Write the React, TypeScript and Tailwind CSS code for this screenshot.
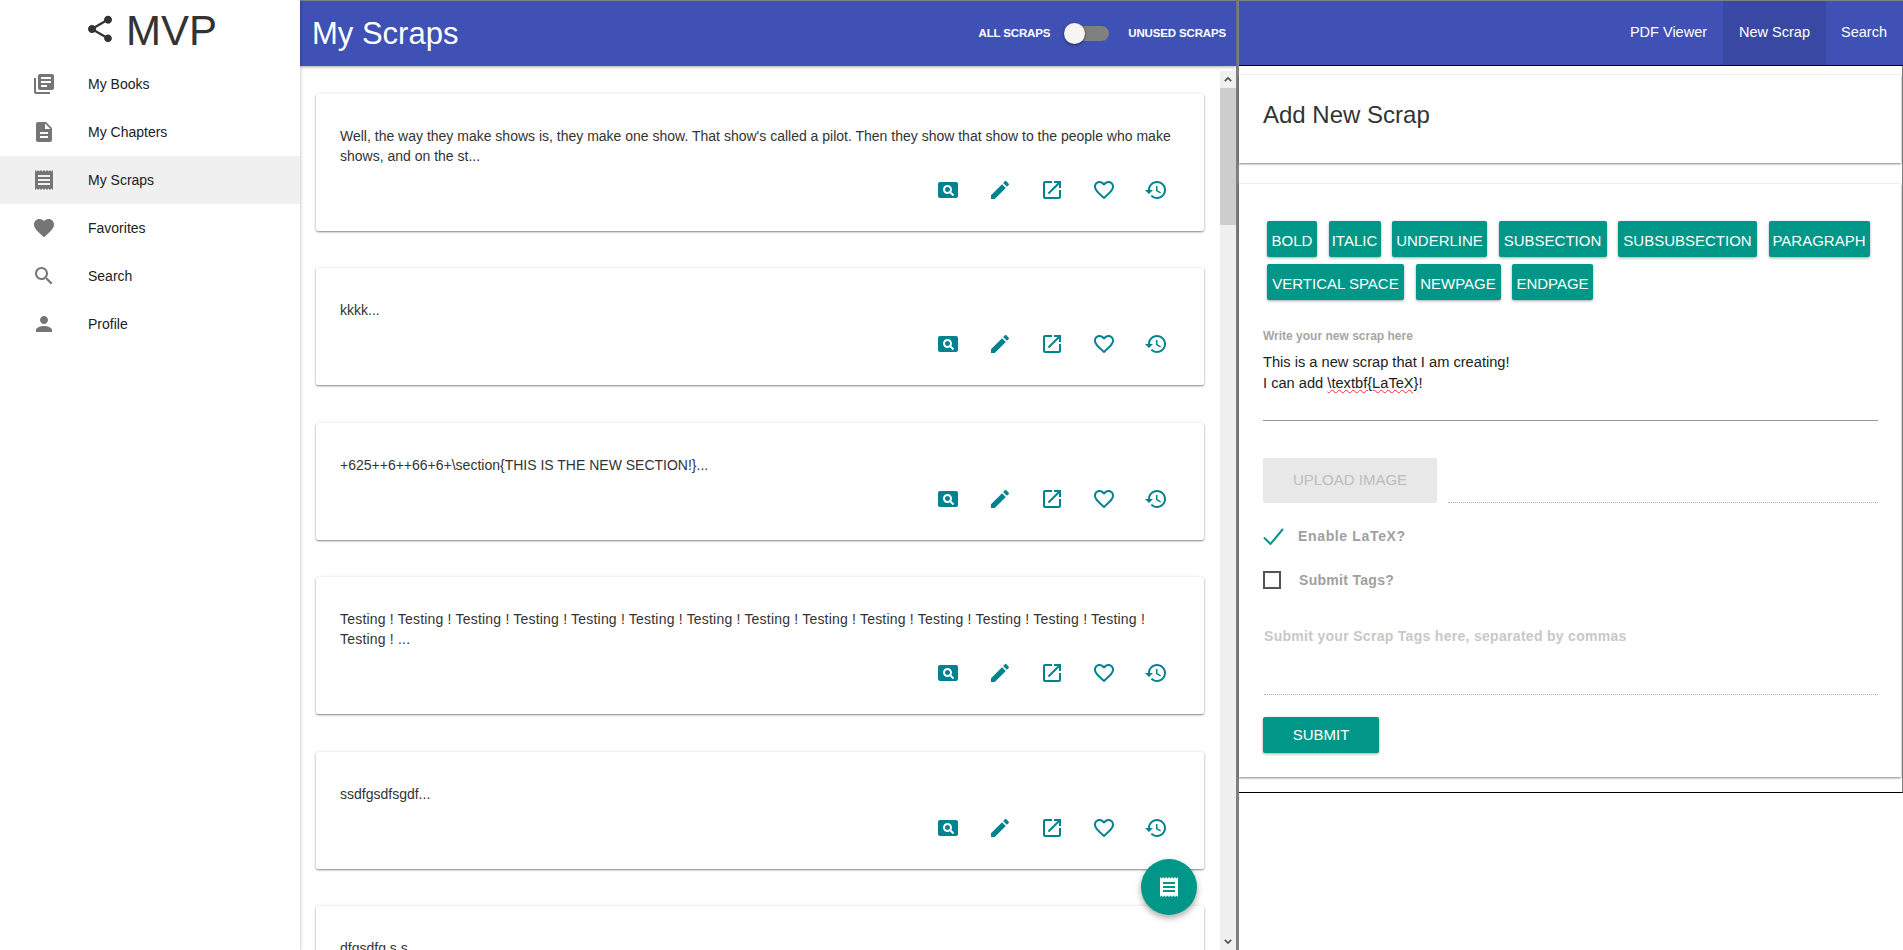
import type { ReactNode } from "react";

const paths = {
  books:
    "M4 6H2v14c0 1.1.9 2 2 2h14v-2H4V6zm16-4H8c-1.1 0-2 .9-2 2v12c0 1.1.9 2 2 2h12c1.1 0 2-.9 2-2V4c0-1.1-.9-2-2-2zm-1 9H9V9h10v2zm-4 4H9v-2h6v2zm4-8H9V5h10v2z",
  description:
    "M14 2H6c-1.1 0-1.99.9-1.99 2L4 20c0 1.1.89 2 1.99 2H18c1.1 0 2-.9 2-2V8l-6-6zm2 16H8v-2h8v2zm0-4H8v-2h8v2zm-3-5V3.5L18.5 9H13z",
  receipt:
    "M18 17H6v-2h12v2zm0-4H6v-2h12v2zm0-4H6V7h12v2zM3 22l1.5-1.5L6 22l1.5-1.5L9 22l1.5-1.5L12 22l1.5-1.5L15 22l1.5-1.5L18 22l1.5-1.5L21 22V2l-1.5 1.5L18 2l-1.5 1.5L15 2l-1.5 1.5L12 2l-1.5 1.5L9 2 7.5 3.5 6 2 4.5 3.5 3 2v20z",
  favorite:
    "M12 21.35l-1.45-1.32C5.4 15.36 2 12.28 2 8.5 2 5.42 4.42 3 7.5 3c1.74 0 3.41.81 4.5 2.09C13.09 3.81 14.76 3 16.5 3 19.58 3 22 5.42 22 8.5c0 3.78-3.4 6.86-8.55 11.54L12 21.35z",
  search:
    "M15.5 14h-.79l-.28-.27C15.41 12.59 16 11.11 16 9.5 16 5.91 13.09 3 9.5 3S3 5.91 3 9.5 5.91 16 9.5 16c1.61 0 3.09-.59 4.23-1.57l.27.28v.79l5 4.99L20.49 19l-4.99-5zm-6 0C7.01 14 5 11.99 5 9.5S7.01 5 9.5 5 14 7.01 14 9.5 11.99 14 9.5 14z",
  person:
    "M12 12c2.21 0 4-1.79 4-4s-1.79-4-4-4-4 1.79-4 4 1.79 4 4 4zm0 2c-2.67 0-8 1.34-8 4v2h16v-2c0-2.66-5.33-4-8-4z",
  share:
    "M18 16.08c-.76 0-1.44.3-1.96.77L8.91 12.7c.05-.23.09-.46.09-.7s-.04-.47-.09-.7l7.05-4.11c.54.5 1.25.81 2.04.81 1.66 0 3-1.34 3-3s-1.34-3-3-3-3 1.34-3 3c0 .24.04.47.09.7L8.04 9.81C7.5 9.31 6.79 9 6 9c-1.66 0-3 1.34-3 3s1.34 3 3 3c.79 0 1.5-.31 2.04-.81l7.12 4.16c-.05.21-.08.43-.08.65 0 1.61 1.31 2.92 2.92 2.92 1.61 0 2.92-1.31 2.92-2.92s-1.31-2.92-2.92-2.92z",
  pageview:
    "M11.5 9C10.12 9 9 10.12 9 11.5s1.12 2.5 2.5 2.5 2.5-1.12 2.5-2.5S12.88 9 11.5 9zM20 4H4c-1.1 0-2 .9-2 2v12c0 1.1.9 2 2 2h16c1.1 0 2-.9 2-2V6c0-1.1-.9-2-2-2zm-3.21 14.21l-2.91-2.91c-.69.44-1.51.7-2.39.7C9.01 16 7 13.99 7 11.5S9.01 7 11.5 7 16 9.01 16 11.5c0 .88-.26 1.69-.7 2.39l2.91 2.9-1.42 1.42z",
  edit: "M3 17.25V21h3.75L17.81 9.94l-3.75-3.75L3 17.25zM20.71 7.04c.39-.39.39-1.02 0-1.41l-2.34-2.34c-.39-.39-1.02-.39-1.41 0l-1.83 1.83 3.75 3.75 1.83-1.83z",
  launch:
    "M19 19H5V5h7V3H5c-1.11 0-2 .9-2 2v14c0 1.1.89 2 2 2h14c1.1 0 2-.9 2-2v-7h-2v7zM14 3v2h3.59l-9.83 9.83 1.41 1.41L19 6.41V10h2V3h-7z",
  favoriteBorder:
    "M16.5 3c-1.74 0-3.41.81-4.5 2.09C10.91 3.81 9.24 3 7.5 3 4.42 3 2 5.42 2 8.5c0 3.78 3.4 6.86 8.55 11.54L12 21.35l1.45-1.32C18.6 15.36 22 12.28 22 8.5 22 5.42 19.58 3 16.5 3zm-4.4 15.55l-.1.1-.1-.1C7.14 14.24 4 11.39 4 8.5 4 6.5 5.5 5 7.5 5c1.54 0 3.04.99 3.57 2.36h1.87C13.46 5.99 14.96 5 16.5 5c2 0 3.5 1.5 3.5 3.5 0 2.89-3.14 5.74-7.9 10.05z",
  restore:
    "M13 3c-4.97 0-9 4.03-9 9H1l3.89 3.89.07.14L9 12H6c0-3.87 3.13-7 7-7s7 3.13 7 7-3.13 7-7 7c-1.93 0-3.68-.79-4.94-2.06l-1.42 1.42C8.27 19.99 10.51 21 13 21c4.97 0 9-4.03 9-9s-4.03-9-9-9zm-1 5v5l4.28 2.54.72-1.21-3.5-2.08V8H12z",
};

const Icon = ({ d, className }: { d: string; className: string }) => (
  <svg viewBox="0 0 24 24" className={className} fill="currentColor">
    <path d={d} />
  </svg>
);

const menuList = [
  { listName: "My Books", icon: paths.books },
  { listName: "My Chapters", icon: paths.description },
  { listName: "My Scraps", icon: paths.receipt, active: true },
  { listName: "Favorites", icon: paths.favorite },
  { listName: "Search", icon: paths.search },
  { listName: "Profile", icon: paths.person },
];

const scraps = [
  {
    text: "Well, the way they make shows is, they make one show. That show's called a pilot. Then they show that show to the people who make shows, and on the st...",
  },
  { text: "kkkk..." },
  { text: "+625++6++66+6+\\section{THIS IS THE NEW SECTION!}..." },
  {
    text: "Testing ! Testing ! Testing ! Testing ! Testing ! Testing ! Testing ! Testing ! Testing ! Testing ! Testing ! Testing ! Testing ! Testing ! Testing ! ...",
    spacing: "tracking-[0.2px]",
  },
  { text: "ssdfgsdfsgdf..." },
  { text: "dfgsdfg s s..." },
];

const toolbar = [
  { label: "BOLD", width: "w-[50px]" },
  { label: "ITALIC", width: "w-[52px]" },
  { label: "UNDERLINE", width: "w-[95px]" },
  { label: "SUBSECTION", width: "w-[108px]" },
  { label: "SUBSUBSECTION", width: "w-[139px]" },
  { label: "PARAGRAPH", width: "w-[101px]" },
  { label: "VERTICAL SPACE", width: "w-[137px]" },
  { label: "NEWPAGE", width: "w-[85px]" },
  { label: "ENDPAGE", width: "w-[81px]" },
];

const Sidebar = () => (
  <aside className="w-[300px] shrink-0 bg-white z-20 shadow-[1px_0_3px_rgba(0,0,0,0.2)]">
    <div className="h-[60px] flex items-center pl-[84px] text-[#333]">
      <Icon d={paths.share} className="w-[32px] h-[32px] mt-[-2px]" />
      <span className="ml-[10px] text-[42px] leading-[60px] mt-[1px]">MVP</span>
    </div>
    {menuList.map((item) => (
      <div
        key={item.listName}
        className={`h-[48px] flex items-center pl-[32px] ${item.active ? "bg-[#f0f0f0]" : ""}`}
      >
        <Icon d={item.icon} className="w-[24px] h-[24px] text-[#757575]" />
        <span className="ml-[32px] text-[14px] text-[#212121]">{item.listName}</span>
      </div>
    ))}
  </aside>
);

const ScrapCard = ({ text, spacing }: { text: string; spacing?: string }) => (
  <div className="bg-white rounded-[2px] pt-[32px] pl-[24px] pb-[29px] mb-[37.4px] shadow-[0_1px_2px_rgba(0,0,0,0.45),0_0_4px_rgba(0,0,0,0.08)]">
    <p className={`text-[14px] leading-[20px] text-[#333] pr-[24px] ${spacing ?? ""}`}>{text}</p>
    <div className="mt-[12px] pr-[36px] flex justify-end gap-[28px] text-[#00838f]">
      <Icon d={paths.pageview} className="w-[24px] h-[24px]" />
      <Icon d={paths.edit} className="w-[24px] h-[24px]" />
      <Icon d={paths.launch} className="w-[24px] h-[24px]" />
      <Icon d={paths.favoriteBorder} className="w-[24px] h-[24px]" />
      <Icon d={paths.restore} className="w-[24px] h-[24px]" />
    </div>
  </div>
);

const ScrapsPane = () => (
  <main className="w-[936px] shrink-0 h-[950px] flex flex-col relative">
    <header className="h-[66px] shrink-0 border-t border-[#808080] bg-[#3f51b5] text-white flex items-center pl-[12px] pr-[10px] z-10 shadow-[0_1px_3px_rgba(0,0,0,0.35)]">
      <h1 className="text-[31px] leading-none flex-1">My Scraps</h1>
      <span className="text-[11.5px] font-bold tracking-[-0.15px]">ALL SCRAPS</span>
      <div className="relative w-[44px] h-[15px] ml-[15px] mr-[19px] rounded-full bg-[#808080]">
        <div className="absolute left-[-1px] top-[-3px] w-[21px] h-[21px] rounded-full bg-[#f5f5f5] shadow-[0_1px_3px_rgba(0,0,0,0.5)]" />
      </div>
      <span className="text-[11.5px] font-bold tracking-[-0.15px]">UNUSED SCRAPS</span>
    </header>
    <div className="flex-1 min-h-0 flex">
      <div className="flex-1 overflow-hidden pt-[28px] pl-[16px] pr-[16px]">
        {scraps.map((scrap) => (
          <ScrapCard key={scrap.text} text={scrap.text} spacing={scrap.spacing} />
        ))}
      </div>
      <div className="w-[16px] shrink-0 mt-[5px] bg-[#f0f0f0] flex flex-col items-center">
        <div className="h-[17px] flex items-center text-[#505050]">
          <svg viewBox="0 0 10 6" className="w-[8px] h-[5px]" fill="none" stroke="currentColor" strokeWidth="2">
            <path d="M1 5l4-4 4 4" />
          </svg>
        </div>
        <div className="w-full h-[137px] bg-[#cdcdcd]" />
        <div className="flex-1" />
        <div className="h-[17px] flex items-center text-[#505050]">
          <svg viewBox="0 0 10 6" className="w-[8px] h-[5px]" fill="none" stroke="currentColor" strokeWidth="2">
            <path d="M1 1l4 4 4-4" />
          </svg>
        </div>
      </div>
    </div>
    <button className="absolute left-[841px] top-[859px] w-[56px] h-[56px] rounded-full bg-[#009688] text-white flex items-center justify-center shadow-[0_3px_6px_rgba(0,0,0,0.35)]">
      <Icon d={paths.receipt} className="w-[24px] h-[24px]" />
    </button>
  </main>
);

const TealButton = ({ children, className }: { children: ReactNode; className: string }) => (
  <button className={`h-[36px] bg-[#009688] text-white rounded-[2px] whitespace-nowrap shadow-[0_1px_3px_rgba(0,0,0,0.35)] ${className}`}>
    {children}
  </button>
);

const NewScrapPane = () => (
  <section className="flex-1 min-w-0 h-[950px] flex flex-col border-l-[3px] border-[#808080]">
    <nav className="h-[66px] shrink-0 border-t border-b border-t-[#808080] border-b-black bg-[#3f51b5] text-white text-[14.5px] flex justify-end pr-[1px] whitespace-nowrap">
      <span className="px-[16px] flex items-center">PDF Viewer</span>
      <span className="flex items-center justify-center bg-[#3949a3] w-[103px]">New Scrap</span>
      <span className="px-[15px] flex items-center">Search</span>
    </nav>
    <div className="h-[727px] shrink-0 border-b border-r border-b-black border-r-[#808080] pt-[9px] pr-[1px]">
      <div className="h-[88px] bg-white flex items-start pl-[24px] pt-[24px] shadow-[0_1px_2px_rgba(0,0,0,0.45),0_0_3px_rgba(0,0,0,0.08)]">
        <h2 className="text-[24px] leading-[32px] text-[#333]">Add New Scrap</h2>
      </div>
      <div className="mt-[21px] h-[593px] bg-white pt-[37px] pl-[24px] pr-[23px] shadow-[0_1px_2px_rgba(0,0,0,0.45),0_0_3px_rgba(0,0,0,0.08)]">
        <div className="flex flex-wrap gap-x-[11.5px] gap-y-[7px] pl-[4px]">
          {toolbar.map((item) => (
            <TealButton key={item.label} className={`pt-[4px] text-[15px] ${item.width}`}>
              {item.label}
            </TealButton>
          ))}
        </div>
        <label className="block mt-[29px] text-[12px] leading-[14px] font-bold text-[#a6a6a6]">
          Write your new scrap here
        </label>
        <div className="mt-[9px] h-[69px] border-b border-[#999] text-[14.65px] leading-[21px] text-[#212121]">
          <div>This is a new scrap that I am creating!</div>
          <div>
            I can add{" "}
            <span className="underline decoration-wavy decoration-red-500 decoration-1">{"\\textbf{LaTeX}"}</span>!
          </div>
        </div>
        <div className="mt-[37px] flex items-end">
          <div className="w-[174px] h-[45px] rounded-[2px] bg-[#e8e8e8] text-[#bdbdbd] text-[15px] flex items-center justify-center">
            UPLOAD IMAGE
          </div>
          <div className="flex-1 ml-[11px] border-b border-dotted border-[#b0b0b0]" />
        </div>
        <div className="mt-[24px] h-[18px] flex items-center">
          <svg viewBox="0 0 21 17" className="w-[21px] h-[17px]" fill="none" stroke="#009688" strokeWidth="2">
            <path d="M1 9.5l6.5 6.5L20 1" />
          </svg>
          <span className="ml-[14px] text-[14px] font-bold tracking-[0.65px] text-[#a09fa0]">Enable LaTeX?</span>
        </div>
        <div className="mt-[26px] h-[18px] flex items-center">
          <div className="w-[18px] h-[18px] border-2 border-[#555]" />
          <span className="ml-[18px] text-[14px] font-bold tracking-[0.3px] text-[#a09fa0]">Submit Tags?</span>
        </div>
        <div className="mt-[37px] ml-[1px] h-[69px] border-b border-dotted border-[#b0b0b0] text-[14px] font-bold tracking-[0.3px] text-[#c8c8c8]">
          Submit your Scrap Tags here, separated by commas
        </div>
        <TealButton className="mt-[22px] w-[116px] text-[15px]">SUBMIT</TealButton>
      </div>
    </div>
  </section>
);

const App = () => (
  <div className="flex w-[1903px] h-[950px] overflow-hidden bg-white font-['Liberation_Sans',Arial,sans-serif]">
    <Sidebar />
    <ScrapsPane />
    <NewScrapPane />
  </div>
);

export default App;
